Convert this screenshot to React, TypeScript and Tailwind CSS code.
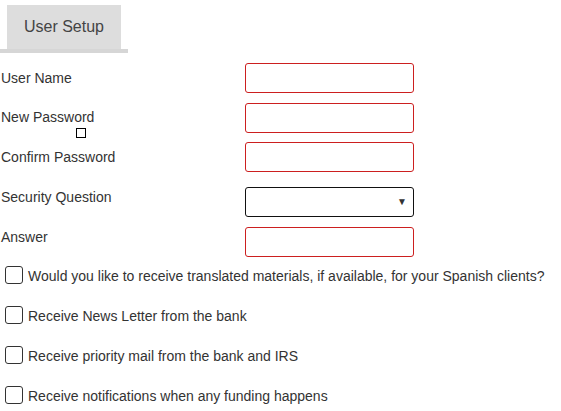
import { useState } from "react";

const fields = [
  { label: "User Name", pad: "pt-[7px]", mt: "mt-[10px]" },
  { label: "New Password", pad: "pt-[6px]", mt: "mt-[10px]", extra: true },
  { label: "Confirm Password", pad: "pt-[7px]", mt: "mt-[9px]" },
];

const options = [
  "Would you like to receive translated materials, if available, for your Spanish clients?",
  "Receive News Letter from the bank",
  "Receive priority mail from the bank and IRS",
  "Receive notifications when any funding happens",
];

function CheckRow({ text }: { text: string }) {
  const [on, setOn] = useState(false);
  return (
    <label className="flex h-[40px] cursor-pointer items-start">
      <span
        onClick={() => setOn(!on)}
        className="ml-[5px] mt-[6px] flex h-[18px] w-[18px] items-center justify-center rounded-[3px] border border-[#333] bg-white"
      >
        {on && <span className="h-[8px] w-[8px] bg-[#333]" />}
      </span>
      <span className="ml-[5px] mt-[8px] text-[14px] leading-[16px] text-[#333]">{text}</span>
    </label>
  );
}

export default function App() {
  return (
    <div
      className="h-[411px] w-[561px] overflow-hidden bg-white text-[#333]"
      style={{ fontFamily: '"Liberation Sans", Arial, sans-serif' }}
    >
      {/* Tab header */}
      <div className="w-[128px] border-b-[4px] border-[#d6d6d6] pt-[5px]">
        <div className="ml-[7px] flex h-[44px] w-[114px] items-center justify-center bg-[#dddddd] text-[16px] text-[#444]">
          User Setup
        </div>
      </div>

      {/* Form rows */}
      <div className="flex flex-col">
        {fields.map((f) => (
          <div key={f.label} className={`flex items-start ${f.mt}`}>
            <div className={`relative w-[245px] pl-[1px] text-[14px] leading-[16px] ${f.pad}`}>
              {f.label}
              {f.extra && (
                <span className="absolute left-[76px] top-[25px] h-[10px] w-[10px] border border-black bg-white" />
              )}
            </div>
            <input className="h-[30px] w-[169px] rounded-[3px] border border-[#cc1f1f] bg-white px-1 text-[14px] outline-none" />
          </div>
        ))}

        <div className="mt-[15px] flex items-start">
          <div className="w-[245px] pl-[1px] pt-[2px] text-[14px] leading-[16px]">Security Question</div>
          <div className="relative h-[30px] w-[169px] rounded-[3px] border border-[#111] bg-white">
            <span className="absolute right-[6px] top-[7px] text-[10px] leading-[14px] text-[#333]">▼</span>
          </div>
        </div>

        <div className="mt-[10px] flex items-start">
          <div className="w-[245px] pl-[1px] pt-[2px] text-[14px] leading-[16px]">Answer</div>
          <input className="h-[30px] w-[169px] rounded-[3px] border border-[#cc1f1f] bg-white px-1 text-[14px] outline-none" />
        </div>
      </div>

      {/* Preferences */}
      <div className="mt-[3px] flex flex-col">
        {options.map((o) => (
          <CheckRow key={o} text={o} />
        ))}
      </div>
    </div>
  );
}
